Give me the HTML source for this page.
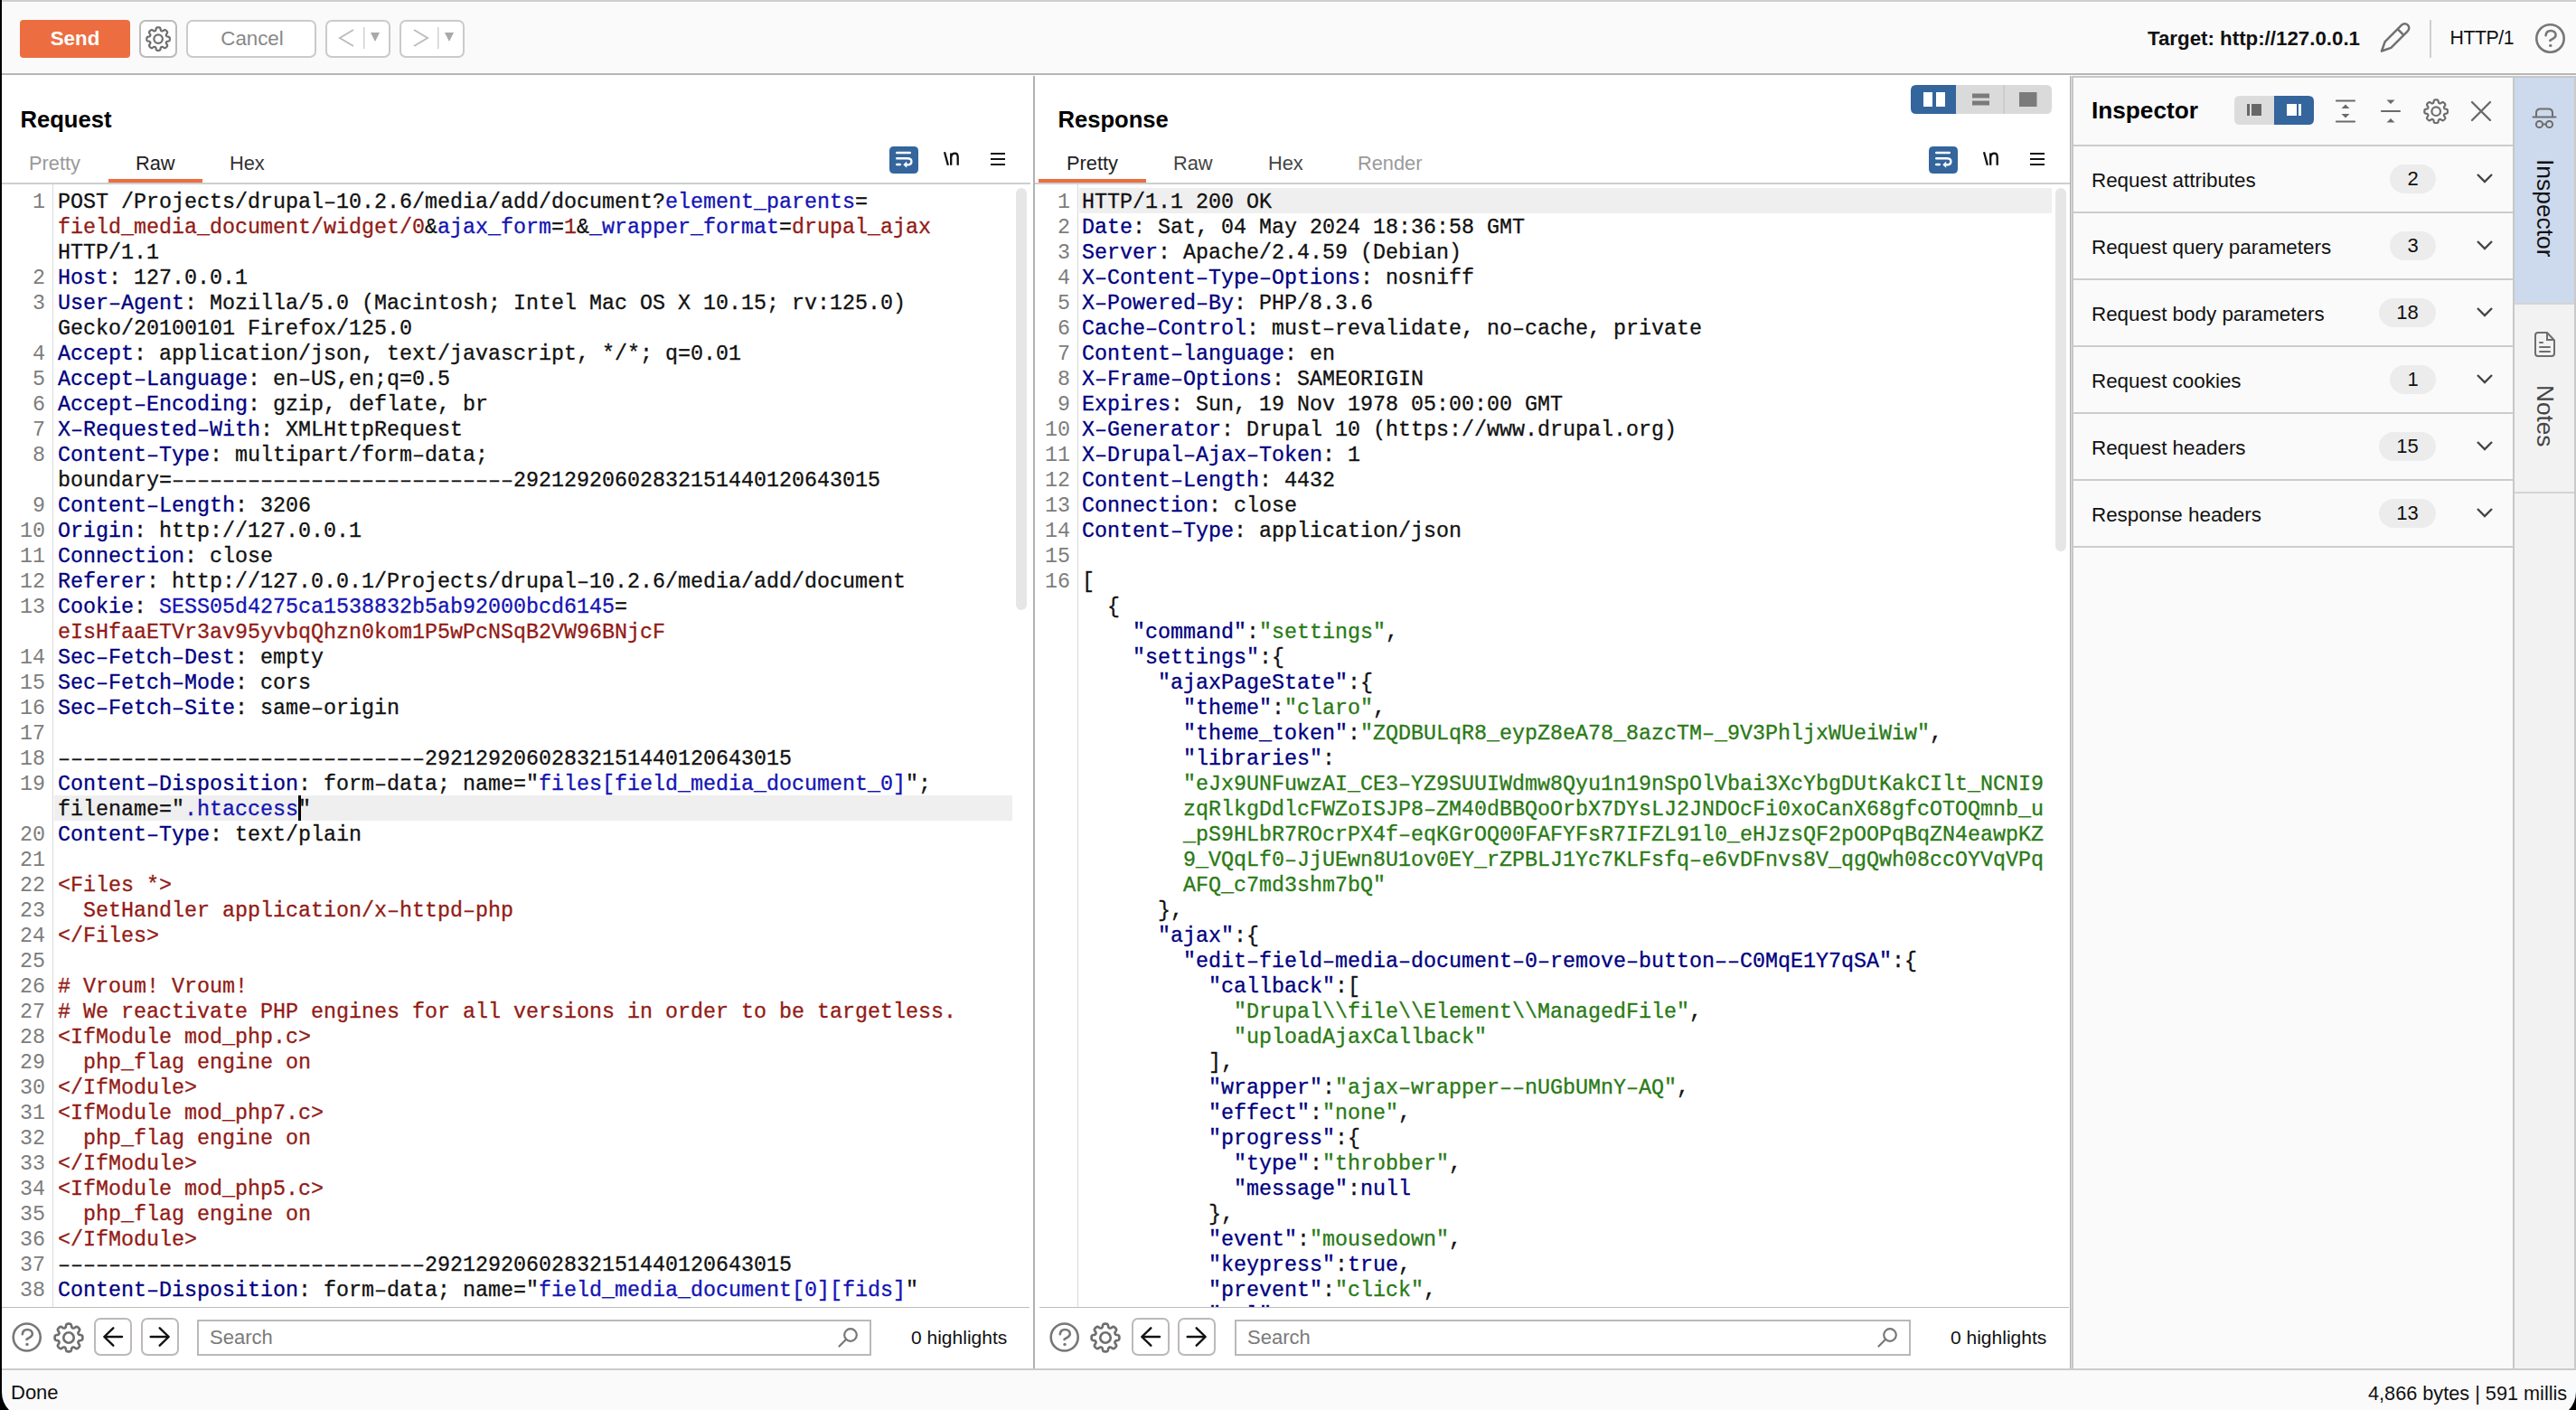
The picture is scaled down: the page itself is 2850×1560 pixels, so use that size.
<!DOCTYPE html>
<html><head><meta charset="utf-8"><title>Burp Repeater</title>
<style>
html,body{margin:0;padding:0}
body{width:2850px;height:1560px;overflow:hidden;position:relative;background:#fafafa;font-family:"Liberation Sans",sans-serif;color:#111}
.a{position:absolute}
.t{position:absolute;white-space:pre;line-height:1}
.gn{position:absolute;margin-top:2px;width:60px;text-align:right;font-family:"Liberation Mono",monospace;font-size:23.33px;line-height:28px;color:#7d7d7d;white-space:pre}
.cr{position:absolute;margin-top:2px;-webkit-text-stroke:0.3px currentColor;font-family:"Liberation Mono",monospace;font-size:23.33px;line-height:28px;white-space:pre;color:#111}
.hl{position:absolute;height:28px;background:#efefef}
.v{color:#111}.n{color:#000080}.k{color:#000080}.p{color:#1414b4}.r{color:#921b16}.s{color:#2a7a16}
.btn{position:absolute;box-sizing:border-box;border:2px solid #c6c4c4;border-radius:7px;background:#fff}
.tab{position:absolute;font-size:21.8px;white-space:pre;line-height:1}
.row{position:absolute;left:2294px;width:486px;height:74px;box-sizing:border-box;border-bottom:2px solid #cccccc}
.rt{position:absolute;left:20px;top:26.5px;font-size:22.4px;white-space:pre;line-height:1;color:#111}
.badge{position:absolute;top:20px;height:32px;border-radius:16px;background:#ececec;font-size:22px;line-height:32px;text-align:center;color:#111}
.chev{position:absolute;left:445px;top:29px}

</style></head><body>
<!-- window frame -->
<div class="a" style="left:0;top:0;width:2850px;height:2px;background:#cbcfcf"></div>
<div class="a" style="left:0;top:2px;width:2850px;height:1px;background:#fff"></div>
<!-- toolbar -->
<div class="a" style="left:0;top:81px;width:2850px;height:2px;background:#b9b5b5"></div>
<div class="a" style="left:22px;top:22px;width:122px;height:42px;background:#ec6e40;border-radius:4px"></div>
<div class="t" style="left:22px;top:32px;width:122px;text-align:center;font-weight:bold;font-size:22.3px;color:#fff">Send</div>
<div class="btn" style="left:154px;top:22px;width:42px;height:42px;border-color:#bdb9b9"></div>
<svg class="a" style="left:160.8px;top:28.8px" width="28.2" height="28.2" viewBox="0 0 32 32"><path d="M30.50,16.00 L30.49,16.46 L30.46,16.91 L30.39,17.36 L30.25,17.80 L29.98,18.21 L29.43,18.56 L28.53,18.80 L27.57,18.97 L26.90,19.17 L26.51,19.41 L26.27,19.70 L26.10,20.00 L25.97,20.31 L25.87,20.65 L25.84,21.01 L25.94,21.47 L26.29,22.08 L26.84,22.88 L27.31,23.68 L27.45,24.32 L27.35,24.81 L27.13,25.21 L26.86,25.58 L26.57,25.92 L26.25,26.25 L25.92,26.57 L25.58,26.86 L25.21,27.13 L24.81,27.35 L24.32,27.45 L23.68,27.31 L22.88,26.84 L22.08,26.29 L21.47,25.94 L21.01,25.84 L20.65,25.87 L20.31,25.97 L20.00,26.10 L19.70,26.27 L19.41,26.51 L19.17,26.90 L18.97,27.57 L18.80,28.53 L18.56,29.43 L18.21,29.98 L17.80,30.25 L17.36,30.39 L16.91,30.46 L16.46,30.49 L16.00,30.50 L15.54,30.49 L15.09,30.46 L14.64,30.39 L14.20,30.25 L13.79,29.98 L13.44,29.43 L13.20,28.53 L13.03,27.57 L12.83,26.90 L12.59,26.51 L12.30,26.27 L12.00,26.10 L11.69,25.97 L11.35,25.87 L10.99,25.84 L10.53,25.94 L9.92,26.29 L9.12,26.84 L8.32,27.31 L7.68,27.45 L7.19,27.35 L6.79,27.13 L6.42,26.86 L6.08,26.57 L5.75,26.25 L5.43,25.92 L5.14,25.58 L4.87,25.21 L4.65,24.81 L4.55,24.32 L4.69,23.68 L5.16,22.88 L5.71,22.08 L6.06,21.47 L6.16,21.01 L6.13,20.65 L6.03,20.31 L5.90,20.00 L5.73,19.70 L5.49,19.41 L5.10,19.17 L4.43,18.97 L3.47,18.80 L2.57,18.56 L2.02,18.21 L1.75,17.80 L1.61,17.36 L1.54,16.91 L1.51,16.46 L1.50,16.00 L1.51,15.54 L1.54,15.09 L1.61,14.64 L1.75,14.20 L2.02,13.79 L2.57,13.44 L3.47,13.20 L4.43,13.03 L5.10,12.83 L5.49,12.59 L5.73,12.30 L5.90,12.00 L6.03,11.69 L6.13,11.35 L6.16,10.99 L6.06,10.53 L5.71,9.92 L5.16,9.12 L4.69,8.32 L4.55,7.68 L4.65,7.19 L4.87,6.79 L5.14,6.42 L5.43,6.08 L5.75,5.75 L6.08,5.43 L6.42,5.14 L6.79,4.87 L7.19,4.65 L7.68,4.55 L8.32,4.69 L9.12,5.16 L9.92,5.71 L10.53,6.06 L10.99,6.16 L11.35,6.13 L11.69,6.03 L12.00,5.90 L12.30,5.73 L12.59,5.49 L12.83,5.10 L13.03,4.43 L13.20,3.47 L13.44,2.57 L13.79,2.02 L14.20,1.75 L14.64,1.61 L15.09,1.54 L15.54,1.51 L16.00,1.50 L16.46,1.51 L16.91,1.54 L17.36,1.61 L17.80,1.75 L18.21,2.02 L18.56,2.57 L18.80,3.47 L18.97,4.43 L19.17,5.10 L19.41,5.49 L19.70,5.73 L20.00,5.90 L20.31,6.03 L20.65,6.13 L21.01,6.16 L21.47,6.06 L22.08,5.71 L22.88,5.16 L23.68,4.69 L24.32,4.55 L24.81,4.65 L25.21,4.87 L25.58,5.14 L25.92,5.43 L26.25,5.75 L26.57,6.08 L26.86,6.42 L27.13,6.79 L27.35,7.19 L27.45,7.68 L27.31,8.32 L26.84,9.12 L26.29,9.92 L25.94,10.53 L25.84,10.99 L25.87,11.35 L25.97,11.69 L26.10,12.00 L26.27,12.30 L26.51,12.59 L26.90,12.83 L27.57,13.03 L28.53,13.20 L29.43,13.44 L29.98,13.79 L30.25,14.20 L30.39,14.64 L30.46,15.09 L30.49,15.54 Z" fill="none" stroke="#6e6e6e" stroke-width="2.5" stroke-linejoin="round"/><circle cx="16" cy="16" r="5.4" fill="none" stroke="#6e6e6e" stroke-width="2.5"/></svg>
<div class="btn" style="left:206px;top:22px;width:144px;height:42px;border-color:#cacaca"></div>
<div class="t" style="left:207px;top:32px;width:144px;text-align:center;font-size:22.3px;color:#888">Cancel</div>
<div class="btn" style="left:360px;top:22px;width:72px;height:42px;border-color:#cacaca"></div>
<svg class="a" style="left:360px;top:22px" width="72" height="42" viewBox="0 0 72 42"><path d="M31,11 L16,20 L31,29" fill="none" stroke="#bdbdbd" stroke-width="2"/><rect x="42" y="8" width="1.5" height="24" fill="#d2d2d2"/><path d="M50,14 L60,14 L55,24 Z" fill="#a9a9a9"/></svg>
<div class="btn" style="left:442px;top:22px;width:72px;height:42px;border-color:#cacaca"></div>
<svg class="a" style="left:442px;top:22px" width="72" height="42" viewBox="0 0 72 42"><path d="M16,11 L31,20 L16,29" fill="none" stroke="#bdbdbd" stroke-width="2"/><rect x="42" y="8" width="1.5" height="24" fill="#d2d2d2"/><path d="M50,14 L60,14 L55,24 Z" fill="#a9a9a9"/></svg>
<div class="t" style="left:2376px;top:32.4px;font-weight:bold;font-size:22.3px;color:#111">Target: http://127.0.0.1</div>
<svg class="a" style="left:2630px;top:22px" width="40" height="40" viewBox="0 0 40 40"><path d="M5,34.5 L8.64,24.14 L27.14,5.64 A4.75,4.75 0 0 1 33.86,12.36 L15.36,30.86 Z M22.64,10.14 L29.36,16.86" fill="none" stroke="#707070" stroke-width="2.5" stroke-linejoin="round"/></svg>
<div class="a" style="left:2688px;top:22px;width:2px;height:42px;background:#cfcfcf"></div>
<div class="t" style="left:2710.5px;top:31.8px;font-size:21.3px;letter-spacing:-0.45px;color:#111">HTTP/1</div>
<svg class="a" style="left:2803px;top:24px" width="37" height="37" viewBox="0 0 37 37"><circle cx="18.5" cy="18.5" r="15.2" fill="none" stroke="#777" stroke-width="2.6"/><path d="M13.6,15.2 C14,11.5 16.3,10 19.1,10 C22.1,10 24.6,12 24.6,14.8 C24.6,17.3 22.3,18.6 20.1,19.6 L18.3,20.8" fill="none" stroke="#777" stroke-width="2.6" stroke-linecap="round" stroke-linejoin="round"/><circle cx="18.8" cy="26.4" r="1.7" fill="#777"/></svg>
<!-- request panel -->
<div class="a" style="left:2px;top:83px;width:1141px;height:1431px;background:#fff"></div>
<div class="t" style="left:22.5px;top:120.3px;font-weight:bold;font-size:25.6px;color:#000">Request</div>
<div class="tab" style="left:32px;top:170.3px;color:#999">Pretty</div>
<div class="tab" style="left:150px;top:170.3px;color:#222">Raw</div>
<div class="tab" style="left:254px;top:170.3px;color:#333">Hex</div>
<div class="a" style="left:120px;top:198px;width:104px;height:4px;background:#ec6e40"></div>
<div class="a" style="left:2px;top:202px;width:1138px;height:2px;background:#cbcfcf"></div>
<svg class="a" style="left:984px;top:162px" width="32" height="30" viewBox="0 0 32 30"><path d="M5,0 H27 Q32,0 32,5 V25 Q32,30 27,30 H5 Q0,30 0,25 V5 Q0,0 5,0 Z" fill="#34659c"/><rect x="7" y="5.8" width="17" height="2.4" rx="1.2" fill="#fff"/><path d="M8.2,13.2 H20.2 Q24.4,13.2 24.4,16.7 Q24.4,20.2 20.2,20.2 H17.5" fill="none" stroke="#fff" stroke-width="2.4" stroke-linecap="round"/><path d="M19.2,16.6 L15.3,20.2 L19.2,23.8 Z" fill="#fff"/><rect x="7" y="18.8" width="6" height="2.4" rx="1.2" fill="#fff"/></svg>
<svg class="a" style="left:1042.0px;top:166px" width="20" height="18" viewBox="0 0 20 18"><path d="M3,2.3 L6.9,16.8 M10.2,3.6 V16.8 M10.2,7.8 Q11.2,3.6 14.4,3.6 Q17.7,3.6 17.7,7.8 V16.8" fill="none" stroke="#111" stroke-width="2.3"/></svg>
<svg class="a" style="left:1096px;top:168px" width="17" height="16" viewBox="0 0 17 16"><rect x="0" y="1" width="16" height="2" fill="#111"/><rect x="0" y="7" width="16" height="2" fill="#111"/><rect x="0" y="13" width="16" height="2" fill="#111"/></svg>
<div class="a" style="left:58px;top:204px;width:1px;height:1242px;background:#d9d9d9"></div>
<div class="a" style="left:1124px;top:208px;width:12px;height:467px;background:#e6e6e6;border-radius:6px"></div>
<div class="a" style="left:2px;top:204px;width:1120px;height:1242px;overflow:hidden">
<div class="a" style="left:-2px;top:-204px;width:1200px;height:1700px">
<div class="gn" style="top:208px;left:-10px">1</div>
<div class="cr" style="top:208px;left:64px"><span class="v">POST /Projects/drupal–10.2.6/media/add/document?</span><span class="p">element_parents</span><span class="v">=</span></div>
<div class="cr" style="top:236px;left:64px"><span class="r">field_media_document/widget/0</span><span class="v">&amp;</span><span class="p">ajax_form</span><span class="v">=</span><span class="r">1</span><span class="v">&amp;</span><span class="p">_wrapper_format</span><span class="v">=</span><span class="r">drupal_ajax</span></div>
<div class="cr" style="top:264px;left:64px"><span class="v">HTTP/1.1</span></div>
<div class="gn" style="top:292px;left:-10px">2</div>
<div class="cr" style="top:292px;left:64px"><span class="n">Host</span><span class="v">: 127.0.0.1</span></div>
<div class="gn" style="top:320px;left:-10px">3</div>
<div class="cr" style="top:320px;left:64px"><span class="n">User–Agent</span><span class="v">: Mozilla/5.0 (Macintosh; Intel Mac OS X 10.15; rv:125.0)</span></div>
<div class="cr" style="top:348px;left:64px"><span class="v">Gecko/20100101 Firefox/125.0</span></div>
<div class="gn" style="top:376px;left:-10px">4</div>
<div class="cr" style="top:376px;left:64px"><span class="n">Accept</span><span class="v">: application/json, text/javascript, */*; q=0.01</span></div>
<div class="gn" style="top:404px;left:-10px">5</div>
<div class="cr" style="top:404px;left:64px"><span class="n">Accept–Language</span><span class="v">: en–US,en;q=0.5</span></div>
<div class="gn" style="top:432px;left:-10px">6</div>
<div class="cr" style="top:432px;left:64px"><span class="n">Accept–Encoding</span><span class="v">: gzip, deflate, br</span></div>
<div class="gn" style="top:460px;left:-10px">7</div>
<div class="cr" style="top:460px;left:64px"><span class="n">X–Requested–With</span><span class="v">: XMLHttpRequest</span></div>
<div class="gn" style="top:488px;left:-10px">8</div>
<div class="cr" style="top:488px;left:64px"><span class="n">Content–Type</span><span class="v">: multipart/form–data;</span></div>
<div class="cr" style="top:516px;left:64px"><span class="v">boundary=–––––––––––––––––––––––––––29212920602832151440120643015</span></div>
<div class="gn" style="top:544px;left:-10px">9</div>
<div class="cr" style="top:544px;left:64px"><span class="n">Content–Length</span><span class="v">: 3206</span></div>
<div class="gn" style="top:572px;left:-10px">10</div>
<div class="cr" style="top:572px;left:64px"><span class="n">Origin</span><span class="v">: http://127.0.0.1</span></div>
<div class="gn" style="top:600px;left:-10px">11</div>
<div class="cr" style="top:600px;left:64px"><span class="n">Connection</span><span class="v">: close</span></div>
<div class="gn" style="top:628px;left:-10px">12</div>
<div class="cr" style="top:628px;left:64px"><span class="n">Referer</span><span class="v">: http://127.0.0.1/Projects/drupal–10.2.6/media/add/document</span></div>
<div class="gn" style="top:656px;left:-10px">13</div>
<div class="cr" style="top:656px;left:64px"><span class="n">Cookie</span><span class="v">: </span><span class="p">SESS05d4275ca1538832b5ab92000bcd6145</span><span class="v">=</span></div>
<div class="cr" style="top:684px;left:64px"><span class="r">eIsHfaaETVr3av95yvbqQhzn0kom1P5wPcNSqB2VW96BNjcF</span></div>
<div class="gn" style="top:712px;left:-10px">14</div>
<div class="cr" style="top:712px;left:64px"><span class="n">Sec–Fetch–Dest</span><span class="v">: empty</span></div>
<div class="gn" style="top:740px;left:-10px">15</div>
<div class="cr" style="top:740px;left:64px"><span class="n">Sec–Fetch–Mode</span><span class="v">: cors</span></div>
<div class="gn" style="top:768px;left:-10px">16</div>
<div class="cr" style="top:768px;left:64px"><span class="n">Sec–Fetch–Site</span><span class="v">: same–origin</span></div>
<div class="gn" style="top:796px;left:-10px">17</div>
<div class="gn" style="top:824px;left:-10px">18</div>
<div class="cr" style="top:824px;left:64px"><span class="v">–––––––––––––––––––––––––––––29212920602832151440120643015</span></div>
<div class="gn" style="top:852px;left:-10px">19</div>
<div class="cr" style="top:852px;left:64px"><span class="n">Content–Disposition</span><span class="v">: form–data; name="</span><span class="p">files[field_media_document_0]</span><span class="v">";</span></div>
<div class="hl" style="top:880px;left:60px;width:1060px"></div>
<div class="cr" style="top:880px;left:64px"><span class="v">filename="</span><span class="p">.htaccess</span><span class="v">"</span></div>
<div class="gn" style="top:908px;left:-10px">20</div>
<div class="cr" style="top:908px;left:64px"><span class="n">Content–Type</span><span class="v">: text/plain</span></div>
<div class="gn" style="top:936px;left:-10px">21</div>
<div class="gn" style="top:964px;left:-10px">22</div>
<div class="cr" style="top:964px;left:64px"><span class="r">&lt;Files *&gt;</span></div>
<div class="gn" style="top:992px;left:-10px">23</div>
<div class="cr" style="top:992px;left:64px"><span class="r">  SetHandler application/x–httpd–php</span></div>
<div class="gn" style="top:1020px;left:-10px">24</div>
<div class="cr" style="top:1020px;left:64px"><span class="r">&lt;/Files&gt;</span></div>
<div class="gn" style="top:1048px;left:-10px">25</div>
<div class="gn" style="top:1076px;left:-10px">26</div>
<div class="cr" style="top:1076px;left:64px"><span class="r"># Vroum! Vroum!</span></div>
<div class="gn" style="top:1104px;left:-10px">27</div>
<div class="cr" style="top:1104px;left:64px"><span class="r"># We reactivate PHP engines for all versions in order to be targetless.</span></div>
<div class="gn" style="top:1132px;left:-10px">28</div>
<div class="cr" style="top:1132px;left:64px"><span class="r">&lt;IfModule mod_php.c&gt;</span></div>
<div class="gn" style="top:1160px;left:-10px">29</div>
<div class="cr" style="top:1160px;left:64px"><span class="r">  php_flag engine on</span></div>
<div class="gn" style="top:1188px;left:-10px">30</div>
<div class="cr" style="top:1188px;left:64px"><span class="r">&lt;/IfModule&gt;</span></div>
<div class="gn" style="top:1216px;left:-10px">31</div>
<div class="cr" style="top:1216px;left:64px"><span class="r">&lt;IfModule mod_php7.c&gt;</span></div>
<div class="gn" style="top:1244px;left:-10px">32</div>
<div class="cr" style="top:1244px;left:64px"><span class="r">  php_flag engine on</span></div>
<div class="gn" style="top:1272px;left:-10px">33</div>
<div class="cr" style="top:1272px;left:64px"><span class="r">&lt;/IfModule&gt;</span></div>
<div class="gn" style="top:1300px;left:-10px">34</div>
<div class="cr" style="top:1300px;left:64px"><span class="r">&lt;IfModule mod_php5.c&gt;</span></div>
<div class="gn" style="top:1328px;left:-10px">35</div>
<div class="cr" style="top:1328px;left:64px"><span class="r">  php_flag engine on</span></div>
<div class="gn" style="top:1356px;left:-10px">36</div>
<div class="cr" style="top:1356px;left:64px"><span class="r">&lt;/IfModule&gt;</span></div>
<div class="gn" style="top:1384px;left:-10px">37</div>
<div class="cr" style="top:1384px;left:64px"><span class="v">–––––––––––––––––––––––––––––29212920602832151440120643015</span></div>
<div class="gn" style="top:1412px;left:-10px">38</div>
<div class="cr" style="top:1412px;left:64px"><span class="n">Content–Disposition</span><span class="v">: form–data; name="</span><span class="p">field_media_document[0][fids]</span><span class="v">"</span></div>
<div class="gn" style="top:1440px;left:-10px">39</div>
<div class="a" style="left:329.5px;top:880px;width:3.5px;height:28px;background:#000"></div>
</div></div>
<div class="a" style="left:2px;top:1446px;width:1137px;height:1px;background:#bfbcbc"></div>
<svg class="a" style="left:12px;top:1462px" width="36" height="36" viewBox="0 0 36 36"><circle cx="17.7" cy="17.5" r="15" fill="none" stroke="#777" stroke-width="2.6"/><path d="M12.8,14.2 C13.2,10.5 15.5,9 18.3,9 C21.3,9 23.8,11 23.8,13.8 C23.8,16.3 21.5,17.6 19.3,18.6 L17.5,19.8" fill="none" stroke="#777" stroke-width="2.6" stroke-linecap="round" stroke-linejoin="round"/><circle cx="18" cy="25.4" r="1.7" fill="#777"/></svg>
<svg class="a" style="left:59px;top:1463px" width="34" height="34" viewBox="0 0 32 32"><path d="M30.50,16.00 L30.49,16.46 L30.46,16.91 L30.39,17.36 L30.25,17.80 L29.98,18.21 L29.43,18.56 L28.53,18.80 L27.57,18.97 L26.90,19.17 L26.51,19.41 L26.27,19.70 L26.10,20.00 L25.97,20.31 L25.87,20.65 L25.84,21.01 L25.94,21.47 L26.29,22.08 L26.84,22.88 L27.31,23.68 L27.45,24.32 L27.35,24.81 L27.13,25.21 L26.86,25.58 L26.57,25.92 L26.25,26.25 L25.92,26.57 L25.58,26.86 L25.21,27.13 L24.81,27.35 L24.32,27.45 L23.68,27.31 L22.88,26.84 L22.08,26.29 L21.47,25.94 L21.01,25.84 L20.65,25.87 L20.31,25.97 L20.00,26.10 L19.70,26.27 L19.41,26.51 L19.17,26.90 L18.97,27.57 L18.80,28.53 L18.56,29.43 L18.21,29.98 L17.80,30.25 L17.36,30.39 L16.91,30.46 L16.46,30.49 L16.00,30.50 L15.54,30.49 L15.09,30.46 L14.64,30.39 L14.20,30.25 L13.79,29.98 L13.44,29.43 L13.20,28.53 L13.03,27.57 L12.83,26.90 L12.59,26.51 L12.30,26.27 L12.00,26.10 L11.69,25.97 L11.35,25.87 L10.99,25.84 L10.53,25.94 L9.92,26.29 L9.12,26.84 L8.32,27.31 L7.68,27.45 L7.19,27.35 L6.79,27.13 L6.42,26.86 L6.08,26.57 L5.75,26.25 L5.43,25.92 L5.14,25.58 L4.87,25.21 L4.65,24.81 L4.55,24.32 L4.69,23.68 L5.16,22.88 L5.71,22.08 L6.06,21.47 L6.16,21.01 L6.13,20.65 L6.03,20.31 L5.90,20.00 L5.73,19.70 L5.49,19.41 L5.10,19.17 L4.43,18.97 L3.47,18.80 L2.57,18.56 L2.02,18.21 L1.75,17.80 L1.61,17.36 L1.54,16.91 L1.51,16.46 L1.50,16.00 L1.51,15.54 L1.54,15.09 L1.61,14.64 L1.75,14.20 L2.02,13.79 L2.57,13.44 L3.47,13.20 L4.43,13.03 L5.10,12.83 L5.49,12.59 L5.73,12.30 L5.90,12.00 L6.03,11.69 L6.13,11.35 L6.16,10.99 L6.06,10.53 L5.71,9.92 L5.16,9.12 L4.69,8.32 L4.55,7.68 L4.65,7.19 L4.87,6.79 L5.14,6.42 L5.43,6.08 L5.75,5.75 L6.08,5.43 L6.42,5.14 L6.79,4.87 L7.19,4.65 L7.68,4.55 L8.32,4.69 L9.12,5.16 L9.92,5.71 L10.53,6.06 L10.99,6.16 L11.35,6.13 L11.69,6.03 L12.00,5.90 L12.30,5.73 L12.59,5.49 L12.83,5.10 L13.03,4.43 L13.20,3.47 L13.44,2.57 L13.79,2.02 L14.20,1.75 L14.64,1.61 L15.09,1.54 L15.54,1.51 L16.00,1.50 L16.46,1.51 L16.91,1.54 L17.36,1.61 L17.80,1.75 L18.21,2.02 L18.56,2.57 L18.80,3.47 L18.97,4.43 L19.17,5.10 L19.41,5.49 L19.70,5.73 L20.00,5.90 L20.31,6.03 L20.65,6.13 L21.01,6.16 L21.47,6.06 L22.08,5.71 L22.88,5.16 L23.68,4.69 L24.32,4.55 L24.81,4.65 L25.21,4.87 L25.58,5.14 L25.92,5.43 L26.25,5.75 L26.57,6.08 L26.86,6.42 L27.13,6.79 L27.35,7.19 L27.45,7.68 L27.31,8.32 L26.84,9.12 L26.29,9.92 L25.94,10.53 L25.84,10.99 L25.87,11.35 L25.97,11.69 L26.10,12.00 L26.27,12.30 L26.51,12.59 L26.90,12.83 L27.57,13.03 L28.53,13.20 L29.43,13.44 L29.98,13.79 L30.25,14.20 L30.39,14.64 L30.46,15.09 L30.49,15.54 Z" fill="none" stroke="#6e6e6e" stroke-width="2.5" stroke-linejoin="round"/><circle cx="16" cy="16" r="5.4" fill="none" stroke="#6e6e6e" stroke-width="2.5"/></svg>
<div class="btn" style="left:104px;top:1458px;width:42px;height:42px;border-color:#bdb9b9"></div>
<svg class="a" style="left:104px;top:1458px" width="42" height="42" viewBox="0 0 42 42"><path d="M31,21 H11.5 M21.3,11.3 L11.3,21 L21.3,30.7" fill="none" stroke="#111" stroke-width="2.4" stroke-linecap="round" stroke-linejoin="round"/></svg>
<div class="btn" style="left:156px;top:1458px;width:42px;height:42px;border-color:#bdb9b9"></div>
<svg class="a" style="left:156px;top:1458px" width="42" height="42" viewBox="0 0 42 42"><path d="M10.7,21 H30.5 M20.7,11.3 L30.7,21 L20.7,30.7" fill="none" stroke="#111" stroke-width="2.4" stroke-linecap="round" stroke-linejoin="round"/></svg>
<div class="a" style="left:218px;top:1460px;width:746px;height:40px;box-sizing:border-box;border:2px solid #bcb8b8;background:#fff"></div>
<div class="t" style="left:232px;top:1469.2px;font-size:22px;color:#7a7a7a">Search</div>
<svg class="a" style="left:924px;top:1466px" width="28" height="28" viewBox="0 0 28 28"><circle cx="17" cy="11" r="6.8" fill="none" stroke="#777" stroke-width="2.2"/><path d="M12.2,15.8 L4.5,23.5" stroke="#777" stroke-width="2.2" stroke-linecap="round"/></svg>
<div class="t" style="left:1008px;top:1468.5px;font-size:21px;color:#111">0 highlights</div>
<div class="a" style="left:1143px;top:84px;width:2px;height:1430px;background:#b3b0b0"></div>
<!-- response panel -->
<div class="a" style="left:1145px;top:83px;width:1145px;height:1431px;background:#fff"></div>
<div class="t" style="left:1170.5px;top:120.3px;font-weight:bold;font-size:25.6px;color:#000">Response</div>
<svg class="a" style="left:2114px;top:94px" width="156" height="32" viewBox="0 0 156 32"><path d="M6,0 H50 V32 H6 Q0,32 0,26 V6 Q0,0 6,0 Z" fill="#34659c"/><path d="M50,0 H150 Q156,0 156,6 V26 Q156,32 150,32 H50 Z" fill="#dadada"/><rect x="102.5" y="0" width="1.5" height="32" fill="#c8c8c8"/><rect x="14" y="8" width="10" height="16" fill="#fff"/><rect x="28" y="8" width="10" height="16" fill="#fff"/><rect x="68" y="9.5" width="19" height="5" fill="#7b7b7b"/><rect x="68" y="17.5" width="19" height="5" fill="#7b7b7b"/><rect x="120" y="8" width="19.5" height="16" fill="#7b7b7b"/></svg>
<div class="tab" style="left:1180px;top:170.3px;color:#222">Pretty</div>
<div class="tab" style="left:1298px;top:170.3px;color:#444">Raw</div>
<div class="tab" style="left:1403px;top:170.3px;color:#444">Hex</div>
<div class="tab" style="left:1502px;top:170.3px;color:#9a9a9a">Render</div>
<div class="a" style="left:1149px;top:198px;width:119px;height:4px;background:#ec6e40"></div>
<div class="a" style="left:1145px;top:202px;width:1145px;height:2px;background:#cbcfcf"></div>
<svg class="a" style="left:2134px;top:162px" width="32" height="30" viewBox="0 0 32 30"><path d="M5,0 H27 Q32,0 32,5 V25 Q32,30 27,30 H5 Q0,30 0,25 V5 Q0,0 5,0 Z" fill="#34659c"/><rect x="7" y="5.8" width="17" height="2.4" rx="1.2" fill="#fff"/><path d="M8.2,13.2 H20.2 Q24.4,13.2 24.4,16.7 Q24.4,20.2 20.2,20.2 H17.5" fill="none" stroke="#fff" stroke-width="2.4" stroke-linecap="round"/><path d="M19.2,16.6 L15.3,20.2 L19.2,23.8 Z" fill="#fff"/><rect x="7" y="18.8" width="6" height="2.4" rx="1.2" fill="#fff"/></svg>
<svg class="a" style="left:2192.0px;top:166px" width="20" height="18" viewBox="0 0 20 18"><path d="M3,2.3 L6.9,16.8 M10.2,3.6 V16.8 M10.2,7.8 Q11.2,3.6 14.4,3.6 Q17.7,3.6 17.7,7.8 V16.8" fill="none" stroke="#111" stroke-width="2.3"/></svg>
<svg class="a" style="left:2246px;top:168px" width="17" height="16" viewBox="0 0 17 16"><rect x="0" y="1" width="16" height="2" fill="#111"/><rect x="0" y="7" width="16" height="2" fill="#111"/><rect x="0" y="13" width="16" height="2" fill="#111"/></svg>
<div class="a" style="left:1192px;top:204px;width:1px;height:1242px;background:#d9d9d9"></div>
<div class="a" style="left:2274px;top:208px;width:12px;height:402px;background:#e6e6e6;border-radius:6px"></div>
<div class="a" style="left:1145px;top:204px;width:1125px;height:1242px;overflow:hidden">
<div class="a" style="left:-1145px;top:-204px;width:2400px;height:1700px">
<div class="hl" style="top:208px;left:1194px;width:1076px"></div>
<div class="gn" style="top:208px;left:1124px">1</div>
<div class="cr" style="top:208px;left:1197px"><span class="v">HTTP/1.1 200 OK</span></div>
<div class="gn" style="top:236px;left:1124px">2</div>
<div class="cr" style="top:236px;left:1197px"><span class="n">Date</span><span class="v">: Sat, 04 May 2024 18:36:58 GMT</span></div>
<div class="gn" style="top:264px;left:1124px">3</div>
<div class="cr" style="top:264px;left:1197px"><span class="n">Server</span><span class="v">: Apache/2.4.59 (Debian)</span></div>
<div class="gn" style="top:292px;left:1124px">4</div>
<div class="cr" style="top:292px;left:1197px"><span class="n">X–Content–Type–Options</span><span class="v">: nosniff</span></div>
<div class="gn" style="top:320px;left:1124px">5</div>
<div class="cr" style="top:320px;left:1197px"><span class="n">X–Powered–By</span><span class="v">: PHP/8.3.6</span></div>
<div class="gn" style="top:348px;left:1124px">6</div>
<div class="cr" style="top:348px;left:1197px"><span class="n">Cache–Control</span><span class="v">: must–revalidate, no–cache, private</span></div>
<div class="gn" style="top:376px;left:1124px">7</div>
<div class="cr" style="top:376px;left:1197px"><span class="n">Content–language</span><span class="v">: en</span></div>
<div class="gn" style="top:404px;left:1124px">8</div>
<div class="cr" style="top:404px;left:1197px"><span class="n">X–Frame–Options</span><span class="v">: SAMEORIGIN</span></div>
<div class="gn" style="top:432px;left:1124px">9</div>
<div class="cr" style="top:432px;left:1197px"><span class="n">Expires</span><span class="v">: Sun, 19 Nov 1978 05:00:00 GMT</span></div>
<div class="gn" style="top:460px;left:1124px">10</div>
<div class="cr" style="top:460px;left:1197px"><span class="n">X–Generator</span><span class="v">: Drupal 10 (https://www.drupal.org)</span></div>
<div class="gn" style="top:488px;left:1124px">11</div>
<div class="cr" style="top:488px;left:1197px"><span class="n">X–Drupal–Ajax–Token</span><span class="v">: 1</span></div>
<div class="gn" style="top:516px;left:1124px">12</div>
<div class="cr" style="top:516px;left:1197px"><span class="n">Content–Length</span><span class="v">: 4432</span></div>
<div class="gn" style="top:544px;left:1124px">13</div>
<div class="cr" style="top:544px;left:1197px"><span class="n">Connection</span><span class="v">: close</span></div>
<div class="gn" style="top:572px;left:1124px">14</div>
<div class="cr" style="top:572px;left:1197px"><span class="n">Content–Type</span><span class="v">: application/json</span></div>
<div class="gn" style="top:600px;left:1124px">15</div>
<div class="gn" style="top:628px;left:1124px">16</div>
<div class="cr" style="top:628px;left:1197px"><span class="v">[</span></div>
<div class="cr" style="top:656px;left:1197px"><span class="v">  {</span></div>
<div class="cr" style="top:684px;left:1197px"><span class="v">    </span><span class="k">"command"</span><span class="v">:</span><span class="s">"settings"</span><span class="v">,</span></div>
<div class="cr" style="top:712px;left:1197px"><span class="v">    </span><span class="k">"settings"</span><span class="v">:{</span></div>
<div class="cr" style="top:740px;left:1197px"><span class="v">      </span><span class="k">"ajaxPageState"</span><span class="v">:{</span></div>
<div class="cr" style="top:768px;left:1197px"><span class="v">        </span><span class="k">"theme"</span><span class="v">:</span><span class="s">"claro"</span><span class="v">,</span></div>
<div class="cr" style="top:796px;left:1197px"><span class="v">        </span><span class="k">"theme_token"</span><span class="v">:</span><span class="s">"ZQDBULqR8_eypZ8eA78_8azcTM–_9V3PhljxWUeiWiw"</span><span class="v">,</span></div>
<div class="cr" style="top:824px;left:1197px"><span class="v">        </span><span class="k">"libraries"</span><span class="v">:</span></div>
<div class="cr" style="top:852px;left:1197px"><span class="v">        </span><span class="s">"eJx9UNFuwzAI_CE3–YZ9SUUIWdmw8Qyu1n19nSpOlVbai3XcYbgDUtKakCIlt_NCNI9</span></div>
<div class="cr" style="top:880px;left:1197px"><span class="v">        </span><span class="s">zqRlkgDdlcFWZoISJP8–ZM40dBBQoOrbX7DYsLJ2JNDOcFi0xoCanX68gfcOTOQmnb_u</span></div>
<div class="cr" style="top:908px;left:1197px"><span class="v">        </span><span class="s">_pS9HLbR7ROcrPX4f–eqKGrOQ00FAFYFsR7IFZL91l0_eHJzsQF2pOOPqBqZN4eawpKZ</span></div>
<div class="cr" style="top:936px;left:1197px"><span class="v">        </span><span class="s">9_VQqLf0–JjUEwn8U1ov0EY_rZPBLJ1Yc7KLFsfq–e6vDFnvs8V_qgQwh08ccOYVqVPq</span></div>
<div class="cr" style="top:964px;left:1197px"><span class="v">        </span><span class="s">AFQ_c7md3shm7bQ"</span></div>
<div class="cr" style="top:992px;left:1197px"><span class="v">      },</span></div>
<div class="cr" style="top:1020px;left:1197px"><span class="v">      </span><span class="k">"ajax"</span><span class="v">:{</span></div>
<div class="cr" style="top:1048px;left:1197px"><span class="v">        </span><span class="k">"edit–field–media–document–0–remove–button––C0MqE1Y7qSA"</span><span class="v">:{</span></div>
<div class="cr" style="top:1076px;left:1197px"><span class="v">          </span><span class="k">"callback"</span><span class="v">:[</span></div>
<div class="cr" style="top:1104px;left:1197px"><span class="v">            </span><span class="s">"Drupal\\file\\Element\\ManagedFile"</span><span class="v">,</span></div>
<div class="cr" style="top:1132px;left:1197px"><span class="v">            </span><span class="s">"uploadAjaxCallback"</span></div>
<div class="cr" style="top:1160px;left:1197px"><span class="v">          ],</span></div>
<div class="cr" style="top:1188px;left:1197px"><span class="v">          </span><span class="k">"wrapper"</span><span class="v">:</span><span class="s">"ajax–wrapper––nUGbUMnY–AQ"</span><span class="v">,</span></div>
<div class="cr" style="top:1216px;left:1197px"><span class="v">          </span><span class="k">"effect"</span><span class="v">:</span><span class="s">"none"</span><span class="v">,</span></div>
<div class="cr" style="top:1244px;left:1197px"><span class="v">          </span><span class="k">"progress"</span><span class="v">:{</span></div>
<div class="cr" style="top:1272px;left:1197px"><span class="v">            </span><span class="k">"type"</span><span class="v">:</span><span class="s">"throbber"</span><span class="v">,</span></div>
<div class="cr" style="top:1300px;left:1197px"><span class="v">            </span><span class="k">"message"</span><span class="v">:</span><span class="k">null</span></div>
<div class="cr" style="top:1328px;left:1197px"><span class="v">          },</span></div>
<div class="cr" style="top:1356px;left:1197px"><span class="v">          </span><span class="k">"event"</span><span class="v">:</span><span class="s">"mousedown"</span><span class="v">,</span></div>
<div class="cr" style="top:1384px;left:1197px"><span class="v">          </span><span class="k">"keypress"</span><span class="v">:</span><span class="k">true</span><span class="v">,</span></div>
<div class="cr" style="top:1412px;left:1197px"><span class="v">          </span><span class="k">"prevent"</span><span class="v">:</span><span class="s">"click"</span><span class="v">,</span></div>
<div class="cr" style="top:1440px;left:1197px"><span class="v">          </span><span class="k">"url"</span><span class="v">:</span></div>
</div></div>
<div class="a" style="left:1150px;top:1446px;width:1139px;height:1px;background:#bfbcbc"></div>
<svg class="a" style="left:1160px;top:1462px" width="36" height="36" viewBox="0 0 36 36"><circle cx="17.7" cy="17.5" r="15" fill="none" stroke="#777" stroke-width="2.6"/><path d="M12.8,14.2 C13.2,10.5 15.5,9 18.3,9 C21.3,9 23.8,11 23.8,13.8 C23.8,16.3 21.5,17.6 19.3,18.6 L17.5,19.8" fill="none" stroke="#777" stroke-width="2.6" stroke-linecap="round" stroke-linejoin="round"/><circle cx="18" cy="25.4" r="1.7" fill="#777"/></svg>
<svg class="a" style="left:1206px;top:1463px" width="34" height="34" viewBox="0 0 32 32"><path d="M30.50,16.00 L30.49,16.46 L30.46,16.91 L30.39,17.36 L30.25,17.80 L29.98,18.21 L29.43,18.56 L28.53,18.80 L27.57,18.97 L26.90,19.17 L26.51,19.41 L26.27,19.70 L26.10,20.00 L25.97,20.31 L25.87,20.65 L25.84,21.01 L25.94,21.47 L26.29,22.08 L26.84,22.88 L27.31,23.68 L27.45,24.32 L27.35,24.81 L27.13,25.21 L26.86,25.58 L26.57,25.92 L26.25,26.25 L25.92,26.57 L25.58,26.86 L25.21,27.13 L24.81,27.35 L24.32,27.45 L23.68,27.31 L22.88,26.84 L22.08,26.29 L21.47,25.94 L21.01,25.84 L20.65,25.87 L20.31,25.97 L20.00,26.10 L19.70,26.27 L19.41,26.51 L19.17,26.90 L18.97,27.57 L18.80,28.53 L18.56,29.43 L18.21,29.98 L17.80,30.25 L17.36,30.39 L16.91,30.46 L16.46,30.49 L16.00,30.50 L15.54,30.49 L15.09,30.46 L14.64,30.39 L14.20,30.25 L13.79,29.98 L13.44,29.43 L13.20,28.53 L13.03,27.57 L12.83,26.90 L12.59,26.51 L12.30,26.27 L12.00,26.10 L11.69,25.97 L11.35,25.87 L10.99,25.84 L10.53,25.94 L9.92,26.29 L9.12,26.84 L8.32,27.31 L7.68,27.45 L7.19,27.35 L6.79,27.13 L6.42,26.86 L6.08,26.57 L5.75,26.25 L5.43,25.92 L5.14,25.58 L4.87,25.21 L4.65,24.81 L4.55,24.32 L4.69,23.68 L5.16,22.88 L5.71,22.08 L6.06,21.47 L6.16,21.01 L6.13,20.65 L6.03,20.31 L5.90,20.00 L5.73,19.70 L5.49,19.41 L5.10,19.17 L4.43,18.97 L3.47,18.80 L2.57,18.56 L2.02,18.21 L1.75,17.80 L1.61,17.36 L1.54,16.91 L1.51,16.46 L1.50,16.00 L1.51,15.54 L1.54,15.09 L1.61,14.64 L1.75,14.20 L2.02,13.79 L2.57,13.44 L3.47,13.20 L4.43,13.03 L5.10,12.83 L5.49,12.59 L5.73,12.30 L5.90,12.00 L6.03,11.69 L6.13,11.35 L6.16,10.99 L6.06,10.53 L5.71,9.92 L5.16,9.12 L4.69,8.32 L4.55,7.68 L4.65,7.19 L4.87,6.79 L5.14,6.42 L5.43,6.08 L5.75,5.75 L6.08,5.43 L6.42,5.14 L6.79,4.87 L7.19,4.65 L7.68,4.55 L8.32,4.69 L9.12,5.16 L9.92,5.71 L10.53,6.06 L10.99,6.16 L11.35,6.13 L11.69,6.03 L12.00,5.90 L12.30,5.73 L12.59,5.49 L12.83,5.10 L13.03,4.43 L13.20,3.47 L13.44,2.57 L13.79,2.02 L14.20,1.75 L14.64,1.61 L15.09,1.54 L15.54,1.51 L16.00,1.50 L16.46,1.51 L16.91,1.54 L17.36,1.61 L17.80,1.75 L18.21,2.02 L18.56,2.57 L18.80,3.47 L18.97,4.43 L19.17,5.10 L19.41,5.49 L19.70,5.73 L20.00,5.90 L20.31,6.03 L20.65,6.13 L21.01,6.16 L21.47,6.06 L22.08,5.71 L22.88,5.16 L23.68,4.69 L24.32,4.55 L24.81,4.65 L25.21,4.87 L25.58,5.14 L25.92,5.43 L26.25,5.75 L26.57,6.08 L26.86,6.42 L27.13,6.79 L27.35,7.19 L27.45,7.68 L27.31,8.32 L26.84,9.12 L26.29,9.92 L25.94,10.53 L25.84,10.99 L25.87,11.35 L25.97,11.69 L26.10,12.00 L26.27,12.30 L26.51,12.59 L26.90,12.83 L27.57,13.03 L28.53,13.20 L29.43,13.44 L29.98,13.79 L30.25,14.20 L30.39,14.64 L30.46,15.09 L30.49,15.54 Z" fill="none" stroke="#6e6e6e" stroke-width="2.5" stroke-linejoin="round"/><circle cx="16" cy="16" r="5.4" fill="none" stroke="#6e6e6e" stroke-width="2.5"/></svg>
<div class="btn" style="left:1252px;top:1458px;width:42px;height:42px;border-color:#bdb9b9"></div>
<svg class="a" style="left:1252px;top:1458px" width="42" height="42" viewBox="0 0 42 42"><path d="M31,21 H11.5 M21.3,11.3 L11.3,21 L21.3,30.7" fill="none" stroke="#111" stroke-width="2.4" stroke-linecap="round" stroke-linejoin="round"/></svg>
<div class="btn" style="left:1303px;top:1458px;width:42px;height:42px;border-color:#bdb9b9"></div>
<svg class="a" style="left:1303px;top:1458px" width="42" height="42" viewBox="0 0 42 42"><path d="M10.7,21 H30.5 M20.7,11.3 L30.7,21 L20.7,30.7" fill="none" stroke="#111" stroke-width="2.4" stroke-linecap="round" stroke-linejoin="round"/></svg>
<div class="a" style="left:1366px;top:1460px;width:748px;height:40px;box-sizing:border-box;border:2px solid #bcb8b8;background:#fff"></div>
<div class="t" style="left:1380px;top:1469.2px;font-size:22px;color:#7a7a7a">Search</div>
<svg class="a" style="left:2074px;top:1466px" width="28" height="28" viewBox="0 0 28 28"><circle cx="17" cy="11" r="6.8" fill="none" stroke="#777" stroke-width="2.2"/><path d="M12.2,15.8 L4.5,23.5" stroke="#777" stroke-width="2.2" stroke-linecap="round"/></svg>
<div class="t" style="left:2158px;top:1468.5px;font-size:21px;color:#111">0 highlights</div>
<div class="a" style="left:2290px;top:84px;width:1px;height:1430px;background:#b0adad"></div>
<div class="a" style="left:2291px;top:84px;width:1px;height:1430px;background:#dcdcdc"></div>
<!-- inspector -->
<div class="a" style="left:2292px;top:84px;width:488px;height:1430px;background:#fafafa;box-sizing:border-box;border-left:2px solid #c6c7c9;border-top:2px solid #c6c7c9"></div>
<div class="t" style="left:2314px;top:108.6px;font-weight:bold;font-size:26.2px;color:#000">Inspector</div>
<svg class="a" style="left:2472px;top:106px" width="88" height="32" viewBox="0 0 88 32"><path d="M6,0 H44 V32 H6 Q0,32 0,26 V6 Q0,0 6,0 Z" fill="#dcdcdc"/><path d="M44,0 H82 Q88,0 88,6 V26 Q88,32 82,32 H44 Z" fill="#34659c"/><rect x="14" y="9" width="3" height="13" fill="#676767"/><rect x="19" y="9" width="11" height="13" fill="#676767"/><rect x="58" y="9" width="11" height="13" fill="#fff"/><rect x="71" y="9" width="3" height="13" fill="#fff"/></svg>
<svg class="a" style="left:2582px;top:108px" width="26" height="30" viewBox="0 0 26 30"><path d="M3,3.5 H23 M3,26.5 H23" stroke="#6a6a6a" stroke-width="2.2" stroke-linecap="round"/><path d="M8.5,12 L13,7.5 L17.5,12 Z M8.5,18 L13,22.5 L17.5,18 Z" fill="#6a6a6a"/></svg>
<svg class="a" style="left:2632px;top:108px" width="26" height="30" viewBox="0 0 26 30"><path d="M3,15 H23" stroke="#6a6a6a" stroke-width="2.2" stroke-linecap="round"/><path d="M8.5,2.5 L17.5,2.5 L13,7 Z M8.5,27.5 L17.5,27.5 L13,23 Z" fill="#6a6a6a"/></svg>
<svg class="a" style="left:2680.6px;top:108.8px" width="28.4" height="28.4" viewBox="0 0 32 32"><path d="M30.50,16.00 L30.49,16.46 L30.46,16.91 L30.39,17.36 L30.25,17.80 L29.98,18.21 L29.43,18.56 L28.53,18.80 L27.57,18.97 L26.90,19.17 L26.51,19.41 L26.27,19.70 L26.10,20.00 L25.97,20.31 L25.87,20.65 L25.84,21.01 L25.94,21.47 L26.29,22.08 L26.84,22.88 L27.31,23.68 L27.45,24.32 L27.35,24.81 L27.13,25.21 L26.86,25.58 L26.57,25.92 L26.25,26.25 L25.92,26.57 L25.58,26.86 L25.21,27.13 L24.81,27.35 L24.32,27.45 L23.68,27.31 L22.88,26.84 L22.08,26.29 L21.47,25.94 L21.01,25.84 L20.65,25.87 L20.31,25.97 L20.00,26.10 L19.70,26.27 L19.41,26.51 L19.17,26.90 L18.97,27.57 L18.80,28.53 L18.56,29.43 L18.21,29.98 L17.80,30.25 L17.36,30.39 L16.91,30.46 L16.46,30.49 L16.00,30.50 L15.54,30.49 L15.09,30.46 L14.64,30.39 L14.20,30.25 L13.79,29.98 L13.44,29.43 L13.20,28.53 L13.03,27.57 L12.83,26.90 L12.59,26.51 L12.30,26.27 L12.00,26.10 L11.69,25.97 L11.35,25.87 L10.99,25.84 L10.53,25.94 L9.92,26.29 L9.12,26.84 L8.32,27.31 L7.68,27.45 L7.19,27.35 L6.79,27.13 L6.42,26.86 L6.08,26.57 L5.75,26.25 L5.43,25.92 L5.14,25.58 L4.87,25.21 L4.65,24.81 L4.55,24.32 L4.69,23.68 L5.16,22.88 L5.71,22.08 L6.06,21.47 L6.16,21.01 L6.13,20.65 L6.03,20.31 L5.90,20.00 L5.73,19.70 L5.49,19.41 L5.10,19.17 L4.43,18.97 L3.47,18.80 L2.57,18.56 L2.02,18.21 L1.75,17.80 L1.61,17.36 L1.54,16.91 L1.51,16.46 L1.50,16.00 L1.51,15.54 L1.54,15.09 L1.61,14.64 L1.75,14.20 L2.02,13.79 L2.57,13.44 L3.47,13.20 L4.43,13.03 L5.10,12.83 L5.49,12.59 L5.73,12.30 L5.90,12.00 L6.03,11.69 L6.13,11.35 L6.16,10.99 L6.06,10.53 L5.71,9.92 L5.16,9.12 L4.69,8.32 L4.55,7.68 L4.65,7.19 L4.87,6.79 L5.14,6.42 L5.43,6.08 L5.75,5.75 L6.08,5.43 L6.42,5.14 L6.79,4.87 L7.19,4.65 L7.68,4.55 L8.32,4.69 L9.12,5.16 L9.92,5.71 L10.53,6.06 L10.99,6.16 L11.35,6.13 L11.69,6.03 L12.00,5.90 L12.30,5.73 L12.59,5.49 L12.83,5.10 L13.03,4.43 L13.20,3.47 L13.44,2.57 L13.79,2.02 L14.20,1.75 L14.64,1.61 L15.09,1.54 L15.54,1.51 L16.00,1.50 L16.46,1.51 L16.91,1.54 L17.36,1.61 L17.80,1.75 L18.21,2.02 L18.56,2.57 L18.80,3.47 L18.97,4.43 L19.17,5.10 L19.41,5.49 L19.70,5.73 L20.00,5.90 L20.31,6.03 L20.65,6.13 L21.01,6.16 L21.47,6.06 L22.08,5.71 L22.88,5.16 L23.68,4.69 L24.32,4.55 L24.81,4.65 L25.21,4.87 L25.58,5.14 L25.92,5.43 L26.25,5.75 L26.57,6.08 L26.86,6.42 L27.13,6.79 L27.35,7.19 L27.45,7.68 L27.31,8.32 L26.84,9.12 L26.29,9.92 L25.94,10.53 L25.84,10.99 L25.87,11.35 L25.97,11.69 L26.10,12.00 L26.27,12.30 L26.51,12.59 L26.90,12.83 L27.57,13.03 L28.53,13.20 L29.43,13.44 L29.98,13.79 L30.25,14.20 L30.39,14.64 L30.46,15.09 L30.49,15.54 Z" fill="none" stroke="#6e6e6e" stroke-width="2.5" stroke-linejoin="round"/><circle cx="16" cy="16" r="5.4" fill="none" stroke="#6e6e6e" stroke-width="2.5"/></svg>
<svg class="a" style="left:2732px;top:110px" width="26" height="26" viewBox="0 0 26 26"><path d="M3,3 L23,23 M23,3 L3,23" stroke="#6a6a6a" stroke-width="2.4" stroke-linecap="round"/></svg>
<div class="a" style="left:2294px;top:160px;width:486px;height:2px;background:#cccccc"></div>
<div class="row" style="top:162px"><div class="rt">Request attributes</div><div class="badge" style="left:350px;width:51px">2</div><svg class="chev" width="20" height="12" viewBox="0 0 20 12"><path d="M2,2 L10,10 L18,2" fill="none" stroke="#444" stroke-width="2.4"/></svg></div>
<div class="row" style="top:236px"><div class="rt">Request query parameters</div><div class="badge" style="left:350px;width:51px">3</div><svg class="chev" width="20" height="12" viewBox="0 0 20 12"><path d="M2,2 L10,10 L18,2" fill="none" stroke="#444" stroke-width="2.4"/></svg></div>
<div class="row" style="top:310px"><div class="rt">Request body parameters</div><div class="badge" style="left:338px;width:63px">18</div><svg class="chev" width="20" height="12" viewBox="0 0 20 12"><path d="M2,2 L10,10 L18,2" fill="none" stroke="#444" stroke-width="2.4"/></svg></div>
<div class="row" style="top:384px"><div class="rt">Request cookies</div><div class="badge" style="left:350px;width:51px">1</div><svg class="chev" width="20" height="12" viewBox="0 0 20 12"><path d="M2,2 L10,10 L18,2" fill="none" stroke="#444" stroke-width="2.4"/></svg></div>
<div class="row" style="top:458px"><div class="rt">Request headers</div><div class="badge" style="left:338px;width:63px">15</div><svg class="chev" width="20" height="12" viewBox="0 0 20 12"><path d="M2,2 L10,10 L18,2" fill="none" stroke="#444" stroke-width="2.4"/></svg></div>
<div class="row" style="top:532px"><div class="rt">Response headers</div><div class="badge" style="left:338px;width:63px">13</div><svg class="chev" width="20" height="12" viewBox="0 0 20 12"><path d="M2,2 L10,10 L18,2" fill="none" stroke="#444" stroke-width="2.4"/></svg></div>
<!-- sidebar -->
<div class="a" style="left:2780px;top:84px;width:2px;height:1430px;background:#c8c8c8"></div>
<div class="a" style="left:2782px;top:86px;width:66px;height:1428px;background:#f3f2f3"></div>
<div class="a" style="left:2782px;top:86px;width:66px;height:249px;background:#cdd9ec"></div>
<div class="a" style="left:2780px;top:84px;width:70px;height:2px;background:#c6c6c8"></div>
<div class="a" style="left:2782px;top:335px;width:66px;height:2px;background:#d4d4d4"></div>
<div class="a" style="left:2782px;top:544px;width:66px;height:2px;background:#d4d4d4"></div>
<div class="a" style="left:2848px;top:84px;width:2px;height:1430px;background:#cacaca"></div>
<svg class="a" style="left:2800px;top:116px" width="30" height="28" viewBox="0 0 30 28"><path d="M2.5,13.5 H27.5" stroke="#6e6e6e" stroke-width="2" stroke-linecap="round"/><path d="M6,13.5 V9 Q6,4.5 10.5,4.5 H19.5 Q24,4.5 24,9 V13.5" fill="none" stroke="#6e6e6e" stroke-width="2"/><circle cx="9.5" cy="21.5" r="3.6" fill="none" stroke="#6e6e6e" stroke-width="2"/><circle cx="20.5" cy="21.5" r="3.6" fill="none" stroke="#6e6e6e" stroke-width="2"/><path d="M13,21.5 H17" stroke="#6e6e6e" stroke-width="2"/></svg>
<div class="t" style="left:2828.5px;top:176px;font-size:26.4px;color:#111;transform-origin:0 0;transform:rotate(90deg)">Inspector</div>
<svg class="a" style="left:2802px;top:365px" width="28" height="32" viewBox="0 0 28 32"><path d="M6,3 H16 L24,11.5 V26 Q24,29 21,29 H6 Q3,29 3,26 V6 Q3,3 6,3 Z" fill="none" stroke="#6e6e6e" stroke-width="2" stroke-linejoin="round"/><path d="M16,3.5 V11 H23.5" fill="none" stroke="#6e6e6e" stroke-width="2"/><path d="M8,14 H11 M8,19 H19 M8,24 H19" stroke="#6e6e6e" stroke-width="2" stroke-linecap="round"/></svg>
<div class="t" style="left:2828.5px;top:425.5px;font-size:26.2px;color:#444;transform-origin:0 0;transform:rotate(90deg)">Notes</div>
<!-- status bar -->
<div class="a" style="left:0;top:1514px;width:2850px;height:2px;background:#cbcbcb"></div>
<div class="a" style="left:0;top:1516px;width:2850px;height:44px;background:#fafafa"></div>
<div class="t" style="left:12px;top:1529.5px;font-size:22px;color:#111">Done</div>
<div class="t" style="left:2620px;top:1531px;font-size:21.7px;color:#111">4,866 bytes | 591 millis</div>
<!-- window edges -->
<div class="a" style="left:0;top:0;width:2px;height:1560px;background:#000"></div>
<svg class="a" style="left:0;top:1540px" width="24" height="20" viewBox="0 0 24 20"><path d="M0,0 L2,0 A29,29 0 0 0 10,20 L0,20 Z" fill="#000"/></svg>
<svg class="a" style="left:2826px;top:1540px" width="24" height="20" viewBox="0 0 24 20"><path d="M24,0 A30,30 0 0 1 16,20 L24,20 Z" fill="#000"/></svg>

</body></html>
